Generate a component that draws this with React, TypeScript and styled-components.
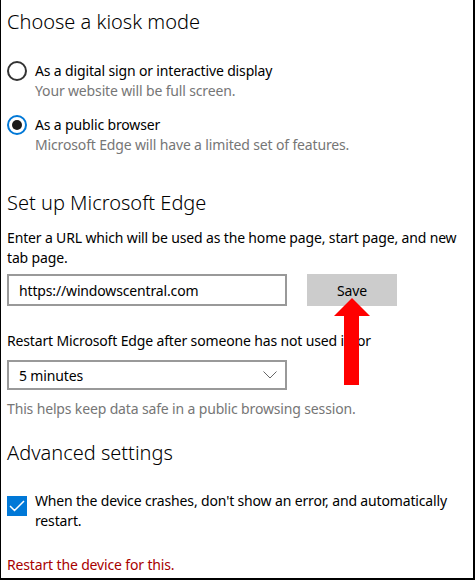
import React from "react";
import styled, { createGlobalStyle } from "styled-components";

const Global = createGlobalStyle`
  html, body { margin: 0; padding: 0; background: #fff; }
  body { font-family: "Noto Sans", "Open Sans", Arial, sans-serif; color: #000; }
  * { box-sizing: border-box; }
`;

const Frame = styled.div`
  position: relative;
  width: 475px;
  height: 580px;
  overflow: hidden;
  background: #fff;
  border-left: 1px solid #000;
  border-right: 2px solid #000;
  border-bottom: 2px solid #000;
  padding: 8px 0 0 6px;
  font-size: 14px;
  letter-spacing: -0.15px;
`;

const Heading = styled.h2<{ $mt?: number }>`
  margin: ${(p) => p.$mt ?? 0}px 0 0 0;
  font-size: 20px;
  font-weight: 300;
  line-height: 28px;
  color: #000;
  letter-spacing: 0;
`;

const OptionRow = styled.div<{ $mt: number }>`
  display: flex;
  align-items: center;
  gap: 8px;
  margin-top: ${(p) => p.$mt}px;
  line-height: 20px;
`;

const Radio = styled.span<{ $checked?: boolean }>`
  width: 20px;
  height: 20px;
  border-radius: 50%;
  border: 2px solid ${(p) => (p.$checked ? "#0078d7" : "#333")};
  display: flex;
  align-items: center;
  justify-content: center;
  flex: none;
  &::after {
    content: "";
    display: ${(p) => (p.$checked ? "block" : "none")};
    width: 10px;
    height: 10px;
    border-radius: 50%;
    background: #1a1a1a;
  }
`;

const Hint = styled.div<{ $indent?: boolean; $mt?: number }>`
  color: #767676;
  line-height: 19px;
  padding-left: ${(p) => (p.$indent ? 28 : 0)}px;
  margin-top: ${(p) => p.$mt ?? 0}px;
`;

const Text = styled.div<{ $mt: number }>`
  line-height: 20px;
  margin-top: ${(p) => p.$mt}px;
  padding-right: 10px;
`;

const InputRow = styled.div`
  display: flex;
  align-items: center;
  gap: 20px;
  margin-top: 6px;
`;

const TextBox = styled.div`
  width: 280px;
  height: 32px;
  border: 2px solid #999;
  padding-left: 10px;
  display: flex;
  align-items: center;
`;

const Button = styled.div`
  width: 90px;
  height: 32px;
  background: #cccccc;
  display: flex;
  align-items: center;
  justify-content: center;
`;

const Select = styled.div`
  width: 280px;
  height: 30px;
  border: 2px solid #999;
  padding: 0 8px 0 10px;
  margin-top: 9px;
  display: flex;
  align-items: center;
  justify-content: space-between;
`;

const CheckRow = styled.div`
  display: flex;
  align-items: flex-start;
  gap: 8px;
  margin-top: 24px;
  line-height: 20px;
  padding-right: 20px;
`;

const CheckBox = styled.span`
  width: 20px;
  height: 20px;
  margin-top: 5px;
  background: #0078d7;
  flex: none;
  display: flex;
  align-items: center;
  justify-content: center;
`;

const Warning = styled.div`
  color: #a80000;
  line-height: 20px;
  margin-top: 24px;
`;

const Arrow = styled.svg`
  position: absolute;
  left: 332px;
  top: 297px;
`;

export default function App() {
  return (
    <>
      <Global />
      <Frame>
        <Heading>Choose a kiosk mode</Heading>
        <OptionRow $mt={25}>
          <Radio />
          <span>As a digital sign or interactive display</span>
        </OptionRow>
        <Hint $indent>Your website will be full screen.</Hint>
        <OptionRow $mt={15}>
          <Radio $checked />
          <span>As a public browser</span>
        </OptionRow>
        <Hint $indent>Microsoft Edge will have a limited set of features.</Hint>

        <Heading $mt={35}>Set up Microsoft Edge</Heading>
        <Text $mt={11}>
          Enter a URL which will be used as the home page, start page, and new tab page.
        </Text>
        <InputRow>
          <TextBox>https://windowscentral.com</TextBox>
          <Button>Save</Button>
        </InputRow>
        <Text $mt={25}>Restart Microsoft Edge after someone has not used it for</Text>
        <Select>
          <span>5 minutes</span>
          <svg width="14" height="8" viewBox="0 0 14 8">
            <path d="M0.5 0.5 L7 7 L13.5 0.5" fill="none" stroke="#666" strokeWidth="1" />
          </svg>
        </Select>
        <Hint $mt={9}>This helps keep data safe in a public browsing session.</Hint>

        <Heading $mt={21}>Advanced settings</Heading>
        <CheckRow>
          <CheckBox>
            <svg width="16" height="12" viewBox="0 0 16 12">
              <path d="M1 6 L5.5 10.5 L15 1" fill="none" stroke="#fff" strokeWidth="1.5" />
            </svg>
          </CheckBox>
          <span>When the device crashes, don't show an error, and automatically restart.</span>
        </CheckRow>
        <Warning>Restart the device for this.</Warning>

        <Arrow width="38" height="90" viewBox="0 0 38 90">
          <polygon points="19,1 37,19 26,19 26,88 11,88 11,19 1,19" fill="#ff0000" />
        </Arrow>
      </Frame>
    </>
  );
}
